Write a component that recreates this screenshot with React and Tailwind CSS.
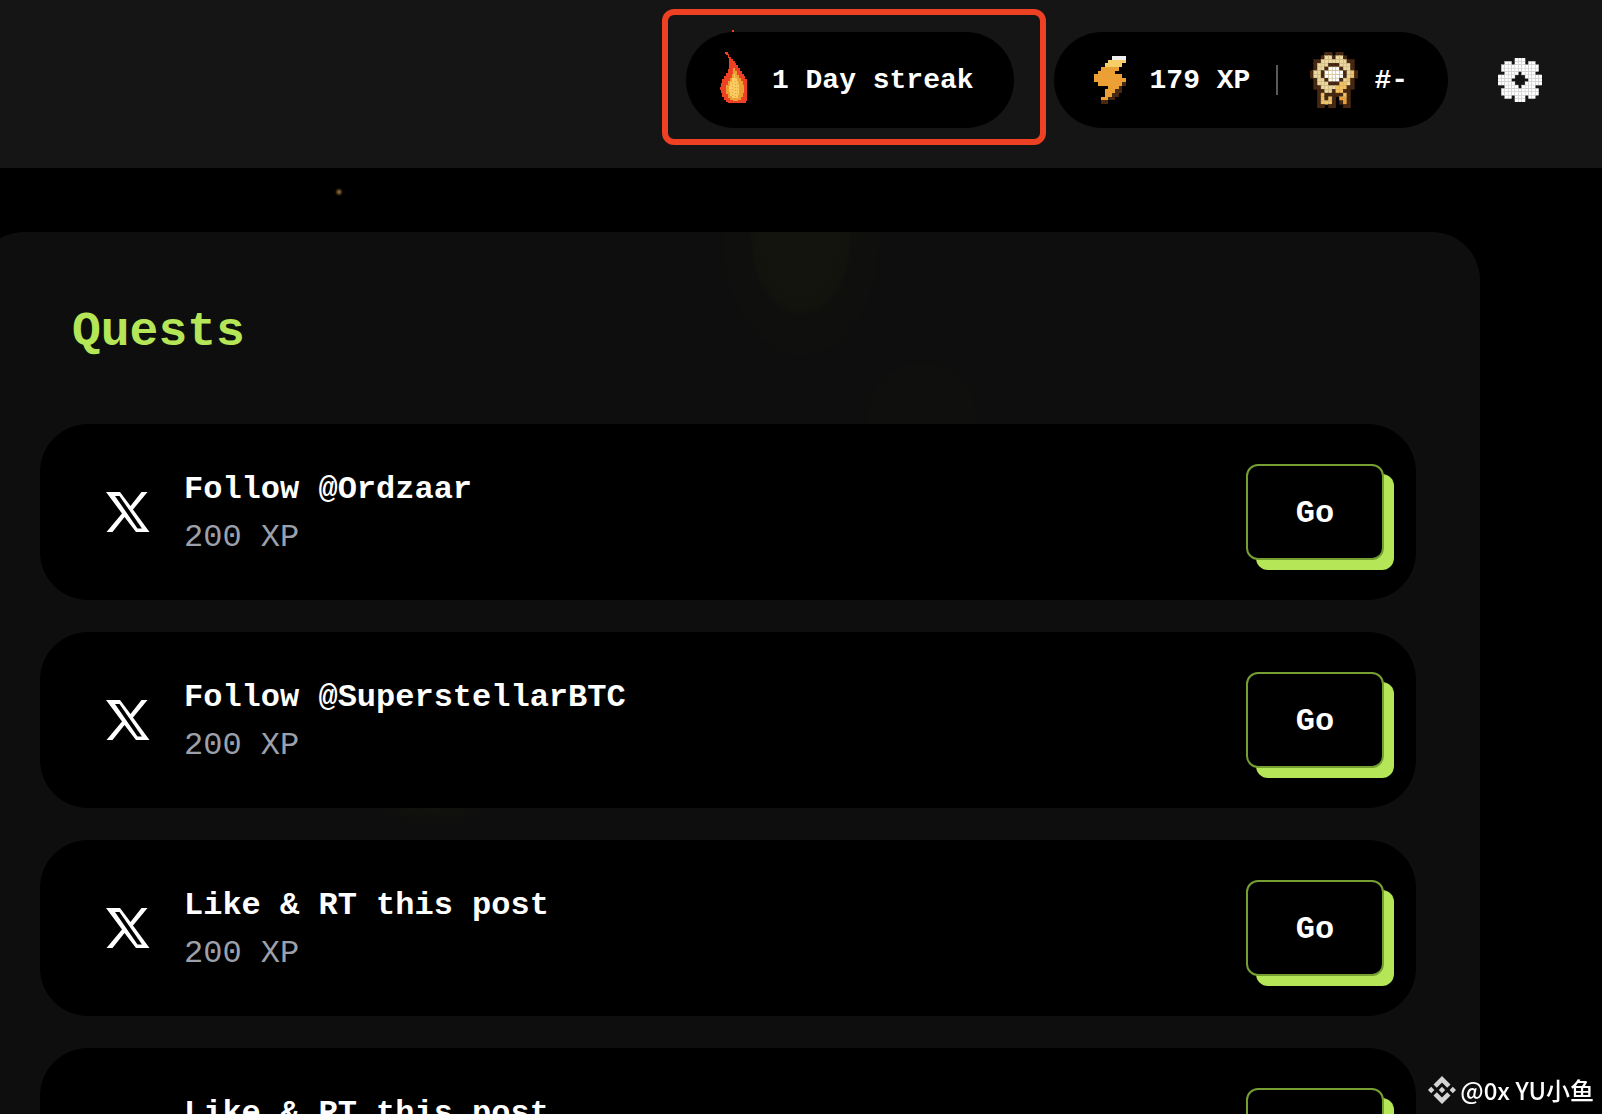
import React from "react";

const QUESTS = [
  { id: 1, title: "Follow @Ordzaar", xp: 200 },
  { id: 2, title: "Follow @SuperstellarBTC", xp: 200 },
  { id: 3, title: "Like & RT this post", xp: 200 },
  { id: 4, title: "Like & RT this post", xp: 200 },
];

// one letter per pixel, "." is empty
const COLORS = {
  W: "#ffffff",
  S: "#efefef",
  L: "#f5ce68",
  O: "#eb9f35",
  D: "#472812",
  C: "#ecd9a0",
  G: "#f6c15c",
};

const BOLT = [
  ".....SSSS",
  "....LLLLL",
  "...LLLLL.",
  "..OOOOO..",
  ".OOOOO...",
  "OOOOOOOO.",
  "OOOOOOOOO",
  ".OOOOOOOD",
  "....OOOD.",
  "...OOODD.",
  "...OODD..",
  "..OODD...",
  "..DD.....",
];

const MEDAL = [
  "....DD.DD....",
  "...DCCDCCD...",
  ".DDCCCCCCCDD.",
  ".DCCCDDDCCCD.",
  ".DCCDWWWDCCD.",
  "DCCDWWWWWDCGD",
  "DCCDWWWWWDCGD",
  ".DCCDWWWDCGD.",
  ".DCCCDDDGGCD.",
  ".DDCCCCGGGDD.",
  "..DDCCDGGDD..",
  "..DGDDDDDGD..",
  "..DGDGD.OOD..",
  "..DGGGD.DOD..",
  "..DD.DD..DD..",
];

const GEAR = [
  ".....WWW.....",
  "..WW.WWW.WW..",
  ".WWWWWWWWWWW.",
  ".WWWWWWWWWWW.",
  "..WWWW.WWWW..",
  "WWWWW...WWWWW",
  "WWWW.....WWWW",
  "WWWWW...WWWWW",
  "..WWWW.WWWW..",
  ".WWWWWWWWWWW.",
  ".WWWWWWWWWWW.",
  "..WW.WWW.WW..",
  ".....WWW.....",
];

const PixelIcon = ({ rows, seam, className }) => (
  <svg
    viewBox={`0 0 ${rows[0].length} ${rows.length}`}
    preserveAspectRatio="none"
    shapeRendering={seam ? "auto" : "crispEdges"}
    className={className}
    aria-hidden="true"
  >
    {rows.map((row, y) =>
      row.split("").map((c, x) =>
        c === "." ? null : (
          <rect
            key={`${x}-${y}`}
            x={x}
            y={y}
            width="1"
            height="1"
            fill={COLORS[c]}
            stroke={seam && c !== "D" ? seam : COLORS[c]}
            strokeWidth={seam ? "0.12" : "0"}
          />
        )
      )
    )}
  </svg>
);

const Flame = () => (
  <svg
    viewBox="0 0 32 56"
    shapeRendering="crispEdges"
    className="h-14 w-8 overflow-visible"
    aria-hidden="true"
  >
    <path fill="#ee4023" d="M14-22h2v2h-2z" />
    <path
      fill="#ee4023"
      d="M7 0h3v2h1v3h2v2h2v2h2v2h1v2h2v3h2v3h2v3h2v2h1v3h2v22h-1v2h-18v-1h-2v-2h-2v-3h-2v-4h-1v-3h-1v-3h1v-4h1v-4h2v-3h2v-3h2v-4h1v-11h-1v-3h-2z"
    />
    <path
      fill="#eb9f35"
      d="M15 16h2v3h2v4h2v3h2v3h2v4h1v8h-1v4h-2v3h-3v1h-5v-1h-3v-2h-2v-4h-2v-9h2v-4h2v-3h2v-4h1z"
    />
    <path
      fill="#f9cb60"
      d="M16 22h1v4h2v3h1v3h1v11h-1v3h-6v-2h-2v-4h-1v-6h1v-4h2v-4h2z"
    />
    <path
      stroke="#eb9f35"
      strokeDasharray="1 2"
      d="M14 31v14M17 29v16M19 32v12"
    />
  </svg>
);

const XLogo = () => (
  <svg viewBox="0 0 44 40" className="h-10 w-11" fill="#fff" aria-hidden="true">
    <path
      fillRule="evenodd"
      d="M0 0h14l10.500 14L35.500 0h6L27 17.500 43.500 40H30L18.500 25 6.500 40H.5L16 21.500zM9 4L31.500 36.500H36L13.500 4z"
    />
  </svg>
);

const QuestCard = ({ quest }) => (
  <li className="flex h-44 items-center rounded-[48px] bg-black pr-8 pl-[66px]">
    <XLogo />
    <div className="flex-1 pt-1 pl-[34px] text-[32px] leading-[48px]">
      <h3 className="font-bold text-white">{quest.title}</h3>
      <p className="text-[#9ca0ab]">{quest.xp} XP</p>
    </div>
    <button
      type="button"
      className="h-24 w-[138px] rounded-xl border-2 border-[#769f32] bg-black pt-1 text-[32px] font-bold text-white shadow-[10px_10px_0_0_#b4e658]"
    >
      Go
    </button>
  </li>
);

const Header = () => (
  <header className="flex items-center justify-end bg-[#151515] pt-8 pr-[60px] pb-10 text-[28px] font-bold text-white">
    <div className="relative mr-10 flex h-24 items-center gap-[22px] rounded-full bg-black pr-10 pl-8">
      <Flame />
      <span className="pt-0.5">1 Day streak</span>
      <div className="pointer-events-none absolute -top-[23px] -right-8 -bottom-[17px] -left-6 rounded-xl border-6 border-[#ee4023]" />
    </div>
    <div className="flex h-24 items-center rounded-full bg-black px-10">
      <PixelIcon rows={BOLT} className="h-12 w-8" />
      <span className="pt-0.5 pl-6">179 XP</span>
      <div className="mr-8 ml-[26px] h-[30px] w-0.5 bg-[#5a5a5a]" />
      <PixelIcon rows={MEDAL} seam="#d6c08a" className="h-14 w-12" />
      <span className="pt-0.5 pl-4">#-</span>
    </div>
    <button type="button" aria-label="Settings" className="ml-[50px]">
      <PixelIcon rows={GEAR} seam="#d4d4d4" className="size-11" />
    </button>
  </header>
);

const Watermark = () => (
  <div className="fixed right-2 bottom-2 flex items-center gap-1 font-['Noto_Sans_CJK_SC','Noto_Sans',sans-serif] text-[24px] font-medium text-white">
    <svg viewBox="0 0 28 28" className="size-7" fill="#d4d4d4" aria-hidden="true">
      <path d="M14 0l8.500 8.500-3.300 3.300L14 6.600l-5.200 5.200-3.300-3.300zM14 28l8.500-8.500-3.300-3.300-5.200 5.200-5.200-5.200-3.300 3.300zM3.200 10.800L6.400 14l-3.200 3.200L0 14zM24.800 10.800L28 14l-3.200 3.200-3.200-3.200zM14 10.800l3.200 3.200-3.200 3.200-3.200-3.200z" />
    </svg>
    <span className="leading-8">@0x YU小鱼</span>
  </div>
);

const App = () => {
  return (
    <div className="h-screen overflow-hidden bg-black font-['Liberation_Mono',monospace]">
      <Header />
      <main className="bg-[radial-gradient(circle_4px_at_339px_24px,#a07a3c,transparent)] pt-16 pr-[122px]">
        <section className="-ml-6 rounded-t-[48px] bg-[#0e0e0e] bg-[radial-gradient(ellipse_78px_118px_at_825px_6px,#13140d_0%,#12130d_60%,#0f100d_66%,#0f100d_98%,transparent_100%),radial-gradient(circle_54px_at_946px_184px,#0f0f0d_96%,transparent_100%),radial-gradient(ellipse_70px_40px_at_458px_556px,#11120d_50%,transparent_100%)] px-16 pt-16">
          <h2 className="pt-1 pl-8 text-[48px] leading-[64px] font-bold text-[#b4e658]">
            Quests
          </h2>
          <ul className="flex flex-col gap-8 pt-15 pb-8">
            {QUESTS.map((q) => (
              <QuestCard key={q.id} quest={q} />
            ))}
          </ul>
        </section>
      </main>
      <Watermark />
    </div>
  );
};

export default App;
